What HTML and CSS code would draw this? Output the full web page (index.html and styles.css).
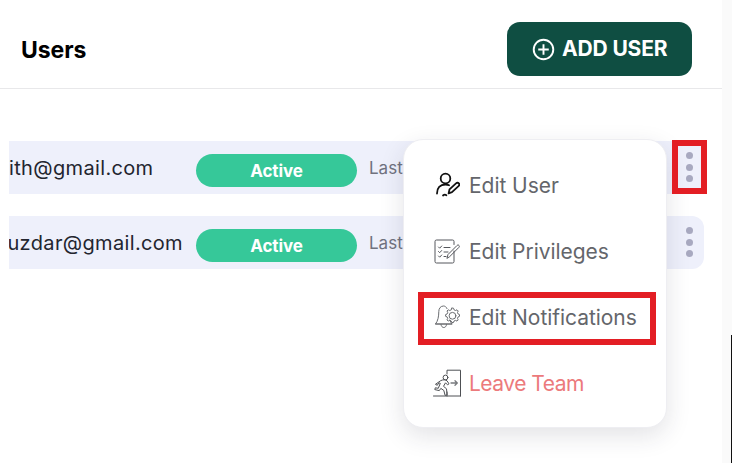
FILE: index.html
```html
<!DOCTYPE html>
<html lang="en">
<head>
<meta charset="utf-8">
<title>Users</title>
<link rel="stylesheet" href="styles.css">
</head>
<body>
<div class="page">
  <main class="main">
    <header class="header">
      <h1 class="title">Users</h1>
      <button class="add-btn">
        <svg class="add-icon" viewBox="0 0 24 24" fill="none" stroke="#fff" stroke-width="2"><circle cx="12" cy="12" r="10.2"/><path d="M12 6.500v11M6.500 12h11"/></svg>
        <span>ADD USER</span>
      </button>
    </header>
    <section class="rows">
      <div class="row">
        <div class="email">ith@gmail.com</div>
        <div class="badge">Active</div>
        <div class="last">Last active</div>
        <div class="dots"><i></i><i></i><i></i></div>
      </div>
      <div class="row">
        <div class="email email-end">buzdar@gmail.com</div>
        <div class="badge">Active</div>
        <div class="last">Last active</div>
        <div class="dots"><i></i><i></i><i></i></div>
      </div>
    </section>
  </main>
  <aside class="strip"></aside>

  <nav class="menu">
    <a class="item">
      <svg class="ico" viewBox="0 0 26 26" fill="none" stroke="#111" stroke-width="1.800" stroke-linecap="round" stroke-linejoin="round"><circle cx="11.500" cy="6.500" r="4.800"/><path d="M3 21.500c0-5.500 3-9 8.500-9 1.400 0 2.600.2 3.600.7"/><path d="M14.600 21.400l.9-4 6.500-6c1-.9 2.100-.8 2.800 0s.6 1.900-.3 2.700l-6.500 6z"/><path d="M9 23.500c1.400-1.300 2.500-1 3.400-.3"/></svg>
      <span>Edit User</span>
    </a>
    <a class="item">
      <svg class="ico" viewBox="0 0 26 26" fill="none" stroke="#55575c" stroke-width="1" stroke-linecap="round" stroke-linejoin="round"><path d="M20 13v10.500a1.500 1.500 0 0 1-1.500 1.500H2.500A1.500 1.500 0 0 1 1 23.500V3.500A1.500 1.500 0 0 1 2.500 2h16A1.500 1.500 0 0 1 20 3.500v3"/><path d="M4.500 9l1.200 1.200 2-2.200M4.500 13.500l1.200 1.200 2-2.200M4.500 18l1.200 1.200 2-2.200M10 9.500h6M10 14h4M10 18.500h2"/><path d="M13 20l1-3.500 9-9c.7-.7 1.500-.7 2 0s.5 1.300-.1 1.900l-9 9z"/></svg>
      <span>Edit Privileges</span>
    </a>
    <a class="item">
      <svg class="ico" viewBox="0 0 26 26" fill="none" stroke="#6a6c70" stroke-width="1" stroke-linecap="round" stroke-linejoin="round"><path d="M13 4.600C12.300 2.800 10.900 2 9.500 2 6.500 2 4.800 4.500 4.800 7.500c0 5-.9 9.500-3.300 12.500h16.500c-1-1.200-1.700-2.500-2.200-4"/><path d="M7 20.500c.3 2 1.400 3 2.800 3s2.500-1 2.800-3"/><path d="M1.500 20h16.500"/><path d="M18 4l1.500.2.500 1.600 1.500.7 1.500-.7 1.200 1.200-.7 1.500.6 1.500 1.400.6v1.700l-1.400.6-.6 1.500.7 1.500-1.200 1.200-1.500-.7-1.500.6-.5 1.500h-1.700l-.6-1.500-1.500-.6-1.500.7-1.200-1.200.7-1.500-.6-1.500-1.500-.6v-1.700l1.500-.6.600-1.500-.7-1.500 1.200-1.200 1.500.7 1.500-.7z"/><circle cx="18.500" cy="11.800" r="3.400"/></svg>
      <span>Edit Notifications</span>
    </a>
    <a class="item item-danger">
      <svg class="ico ico-wide" viewBox="0 0 28 28" fill="none" stroke="#4e5054" stroke-width="1" stroke-linecap="round" stroke-linejoin="round"><path d="M.5 27h27M14 5V1.200h13.500V27M14 27v-4"/><path d="M18 14h6M22 11.800l2.300 2.200-2.300 2.200" stroke="#77797d" stroke-width="1.300"/><circle cx="12.500" cy="8.500" r="2.400"/><path d="M8 11.500c2-1 4.500-1 6 .3l2 3-1.500 1-2-2-2 3.500 3 2.500.6 6-2 .6-1.300-5-3-2-1.500 2.200-4.500-1 .5-1.800 3 .5 2-5-1.500-.5-1.500 2.500-1.500-.8z"/></svg>
      <span>Leave Team</span>
    </a>
  </nav>
  <div class="mark mark-dots"></div>
  <div class="mark mark-item"></div>
  <div class="edge"></div>
</div>
</body>
</html>
```
FILE: styles.css
```css
* { box-sizing: border-box; }
html, body { margin: 0; padding: 0; }
body { width: 732px; height: 463px; overflow: hidden; background: #fff; font-family: "Inter", "Liberation Sans", sans-serif; }
.page { position: relative; display: flex; width: 732px; height: 463px; }
.main { width: 722px; flex: none; }
.strip { flex: 1; background: #fafafa; }
.header { height: 89px; display: flex; align-items: flex-start; justify-content: space-between; padding: 22px 30px 0 21px; border-bottom: 1px solid #e8e8ea; }
.title { margin: 14px 0 0; font-size: 23px; line-height: 28px; font-weight: 700; color: #000; letter-spacing: -.05px; }
.add-btn { display: flex; align-items: center; gap: 7px; width: 185px; height: 54px; padding: 0 0 0 25px; border: 0; border-radius: 13px; background: #0f4e42; color: #fff; font: 700 21px/24px "Inter", "Liberation Sans", sans-serif; letter-spacing: -.15px; }
.add-icon { width: 23px; height: 23px; flex: none; }
.rows { display: flex; flex-direction: column; gap: 22px; padding: 52px 18px 0 9px; }
.row { position: relative; display: flex; align-items: center; height: 53px; background: #eef0fb; border-radius: 0 12px 12px 0; }
.email { width: 187px; flex: none; display: flex; overflow: hidden; white-space: nowrap; font-size: 20px; line-height: 24px; color: #23252f; letter-spacing: .35px; }
.email-end { justify-content: flex-end; padding-right: 13px; }
.badge { width: 161px; height: 33px; flex: none; display: flex; align-items: center; justify-content: center; border-radius: 17px; background: #36c899; color: #fff; font-size: 17px; font-weight: 700; letter-spacing: -.1px; margin-top: 6px; }
.last { margin-left: 12px; font-size: 17px; color: #70727f; white-space: nowrap; }
.dots { margin-left: auto; margin-right: 11px; display: flex; flex-direction: column; gap: 4.500px; margin-top: -1px; }
.dots i { display: block; width: 7px; height: 7px; border-radius: 50%; background: #a8a9c0; }
.menu { position: absolute; left: 403px; top: 139px; width: 264px; height: 289px; padding: 12px 0 0 30px; display: flex; flex-direction: column; background: #fff; border: 1px solid #eeeef2; border-radius: 20px; box-shadow: 0 8px 24px rgba(40, 40, 60, .13); }
.item { display: flex; align-items: center; gap: 9px; height: 66px; font-size: 21px; color: #64666b; white-space: nowrap; letter-spacing: -.05px; }
.item-danger { color: #ec7a7c; letter-spacing: -.5px; }
.ico { width: 26px; height: 26px; flex: none; }
.ico-wide { width: 28px; height: 28px; margin-left: -1px; margin-right: -1px; }
.mark { position: absolute; border: 6px solid #e31e24; }
.mark-dots { left: 672px; top: 140px; width: 35px; height: 54px; }
.mark-item { left: 418px; top: 292px; width: 238px; height: 53px; }
.edge { position: absolute; left: 731px; top: 335px; width: 1px; height: 128px; background: #111; }
```
